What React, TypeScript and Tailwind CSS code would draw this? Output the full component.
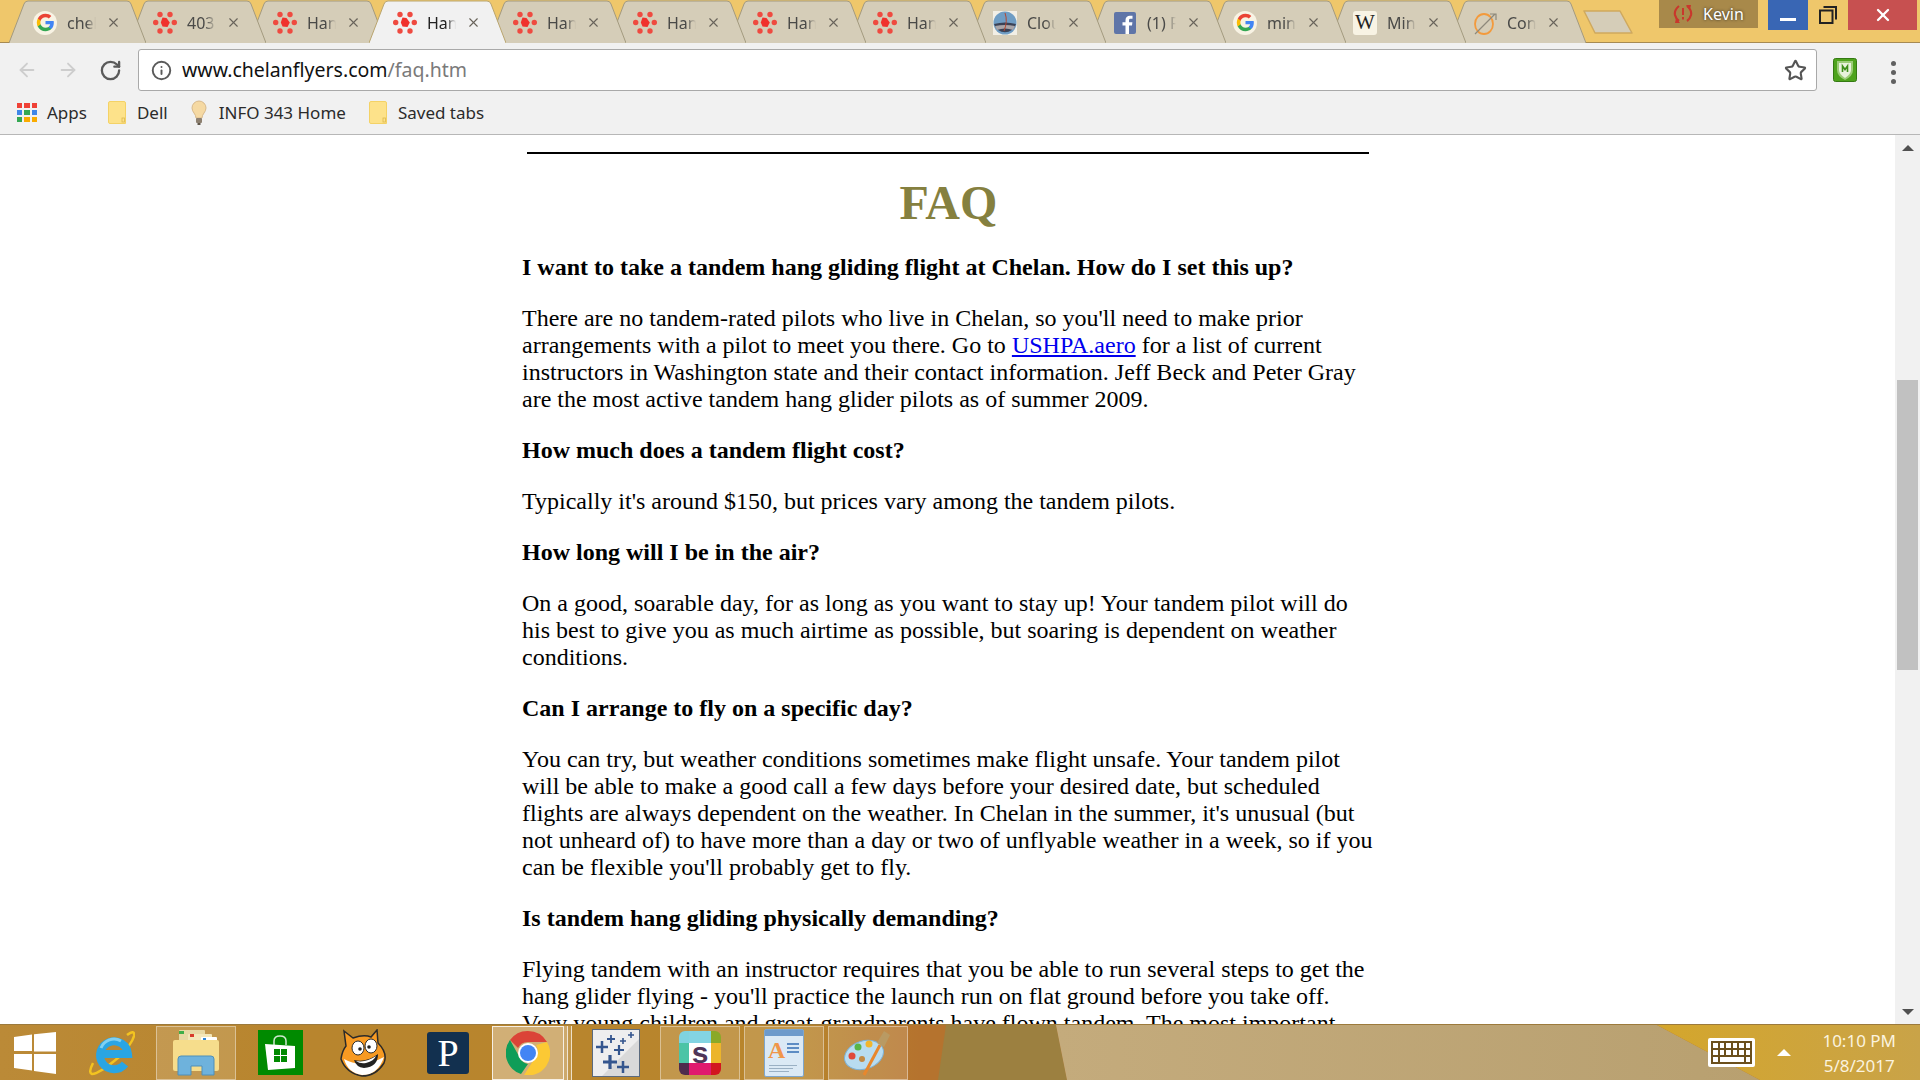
import React from 'react';
import { ArrowLeft, ArrowRight, Info, RotateCw, Star, X } from 'lucide-react';

type TabItem = { icon: string; title: string; active?: boolean };

const tabs: TabItem[] = [
  { icon: 'google', title: 'chelan' },
  { icon: 'paw', title: '403 Forbidden' },
  { icon: 'paw', title: 'Hang Gliding' },
  { icon: 'paw', title: 'Hang Gliding', active: true },
  { icon: 'paw', title: 'Hang Gliding' },
  { icon: 'paw', title: 'Hang Gliding' },
  { icon: 'paw', title: 'Hang Gliding' },
  { icon: 'paw', title: 'Hang Gliding' },
  { icon: 'cloud', title: 'Cloudbase' },
  { icon: 'facebook', title: '(1) Facebook' },
  { icon: 'google', title: 'minutes' },
  { icon: 'wiki', title: 'Minutes' },
  { icon: 'compass', title: 'Contact' },
];

function GoogleIcon() {
  return (
    <div className="w-[24px] h-[24px] rounded-full bg-[#f8f3e4] flex items-center justify-center">
      <svg viewBox="0 0 48 48" className="w-[19px] h-[19px]">
        <path fill="#4285F4" d="M45 24.5c0-1.6-.1-3.1-.4-4.5H24v8.5h11.8c-.5 2.800-2 5.100-4.400 6.700v5.500h7.100c4.100-3.800 6.500-9.400 6.500-16.200z" />
        <path fill="#34A853" d="M24 46c5.900 0 10.900-2 14.500-5.300l-7.100-5.500c-2 1.300-4.500 2.100-7.400 2.100-5.700 0-10.500-3.800-12.200-9H4.500v5.700C8.100 41.100 15.500 46 24 46z" />
        <path fill="#FBBC05" d="M11.800 28.300c-.4-1.300-.7-2.800-.7-4.300s.3-3 .7-4.300V14H4.500C3 17 2 20.400 2 24s1 7 2.500 10l7.300-5.700z" />
        <path fill="#EA4335" d="M24 10.800c3.200 0 6.100 1.100 8.400 3.300l6.300-6.300C34.900 4.200 29.900 2 24 2 15.500 2 8.100 6.900 4.500 14l7.300 5.700c1.700-5.100 6.500-8.900 12.200-8.900z" />
      </svg>
    </div>
  );
}

function PawIcon() {
  return (
    <svg viewBox="0 0 24 24" className="w-[24px] h-[24px]">
      <g fill="#ef4a40">
        <circle cx="7" cy="3.500" r="2.700" />
        <circle cx="17" cy="3.500" r="2.700" />
        <circle cx="2.700" cy="11.500" r="2.700" />
        <circle cx="21.300" cy="11.500" r="2.700" />
        <circle cx="7" cy="20" r="2.700" />
        <circle cx="17" cy="20" r="2.700" />
      </g>
      <path d="M9.500 6.500 L13.500 7 L16.800 11.500 L14.500 16 L9.500 15.500 L7.800 11.500 Z" fill="#f0302c" />
    </svg>
  );
}

function CloudIcon() {
  return (
    <svg viewBox="0 0 24 24" className="w-[24px] h-[24px]">
      <rect width="24" height="24" fill="#f2efe6" />
      <circle cx="12" cy="12" r="11.500" fill="#6f9dc4" />
      <path d="M1 13 Q12 10 23 13 A11.500 11.500 0 0 1 1 13z" fill="#3b4256" />
      <path d="M2 15 Q12 13 22 15 L20 19 Q12 16 4 19z" fill="#a9a5a8" />
      <path d="M12 2 Q15 10 11 20" stroke="#b5452e" strokeWidth="1" fill="none" />
    </svg>
  );
}

function FacebookIcon() {
  return (
    <svg viewBox="0 0 22 22" className="w-[22px] h-[22px]">
      <rect width="22" height="22" rx="2" fill="#5f75a8" />
      <path d="M15 22v-8.500h3l.4-3.300H15V8.300c0-1 .3-1.600 1.700-1.600h1.800V3.800c-.4 0-1.400-.1-2.600-.1-2.600 0-4.400 1.600-4.400 4.500v2H8.500v3.300h3V22z" fill="#fff" />
    </svg>
  );
}

function WikiIcon() {
  return (
    <div className="w-[24px] h-[24px] rounded-[3px] bg-[#f8f3e4] flex items-center justify-center text-[21px] leading-none text-[#222] font-['Liberation_Serif',serif]">
      W
    </div>
  );
}

function CompassIcon() {
  return (
    <svg viewBox="0 0 24 24" className="w-[24px] h-[24px]">
      <ellipse cx="11" cy="13" rx="9" ry="10" stroke="#f39a3c" strokeWidth="1.800" fill="none" />
      <path d="M2 23 L22 3 M17 3 H23 V9" stroke="#8d897b" strokeWidth="1.200" fill="none" />
    </svg>
  );
}

function TabIcon({ name }: { name: string }) {
  if (name === 'google') return <GoogleIcon />;
  if (name === 'paw') return <PawIcon />;
  if (name === 'cloud') return <CloudIcon />;
  if (name === 'facebook') return <FacebookIcon />;
  if (name === 'wiki') return <WikiIcon />;
  return <CompassIcon />;
}

function Tab({ tab, index }: { tab: TabItem; index: number }) {
  return (
    <div
      className="relative w-[137px] h-[43px] shrink-0 -ml-[17px] first:ml-[9px]"
      style={{ zIndex: tab.active ? 50 : 30 - index }}
    >
      <svg viewBox="0 0 137 43" className="absolute inset-0 w-[137px] h-[43px]">
        <path
          d="M0 43 L15 4 Q16 1 19 1 L118 1 Q121 1 122 4 L137 43"
          fill={tab.active ? '#f1f1f1' : '#d5cdb8'}
          stroke={tab.active ? '#b9a56f' : '#a39a7f'}
          strokeWidth="1"
        />
      </svg>
      <div className="absolute inset-0 flex items-center pt-[2px] pl-[24px]">
        <div className="w-[24px] h-[24px] flex items-center justify-center shrink-0">
          <TabIcon name={tab.icon} />
        </div>
        <div
          className={`ml-[10px] w-[29px] overflow-hidden whitespace-nowrap text-[16px] [mask-image:linear-gradient(to_right,black_65%,transparent)] ${
            tab.active ? 'text-[#222]' : 'text-[#4a4a48]'
          }`}
        >
          {tab.title}
        </div>
        <X className="ml-[10px] w-[15px] h-[15px] text-[#68635a]" strokeWidth={1.800} />
      </div>
    </div>
  );
}

function TitleBar() {
  return (
    <div className="h-[43px] shrink-0 bg-[#efc76b] border-b border-[#a68a52] flex items-start">
      {tabs.map((tab, i) => (
        <Tab key={i} tab={tab} index={i} />
      ))}
      <div className="-ml-[3px] mt-[10px] w-[50px] h-[24px] shrink-0">
        <svg viewBox="0 0 50 24" className="w-[50px] h-[24px]">
          <path d="M1 1 H37 L49 23 H12 Z" fill="#d5cdb8" stroke="#cfa95e" strokeWidth="1.500" strokeLinejoin="round" />
        </svg>
      </div>
      <div className="ml-[26px] w-[99px] h-[28px] bg-[#a8894a] flex items-center justify-center gap-[10px] shrink-0">
        <svg viewBox="0 0 20 20" className="w-[20px] h-[20px]">
          <path d="M6 2 Q1 6 2 11 Q3 15 6 17 M14 2 Q19 6 18 11 Q17 15 14 17" stroke="#c9372c" strokeWidth="2.200" fill="none" />
          <path d="M3 14 L7 19 L2 19 Z M13 1 H18 L17 6 Z" fill="#c9372c" />
          <path d="M10 4 V11 M10 13 V15.500" stroke="#c9372c" strokeWidth="2" />
        </svg>
        <span className="text-[16px] text-white [text-shadow:0_0_3px_#222]">Kevin</span>
      </div>
      <div className="ml-[10px] w-[40px] h-[30px] bg-[#3966b4] flex items-center justify-center pt-[9px] shrink-0">
        <div className="w-[16px] h-[3px] bg-white" />
      </div>
      <div className="w-[40px] h-[30px] flex items-center justify-center shrink-0">
        <svg viewBox="0 0 18 18" className="w-[18px] h-[18px]">
          <rect x="1" y="4.500" width="12.500" height="12.500" fill="none" stroke="#222" strokeWidth="2" />
          <path d="M4.500 1 H17 V13.500" fill="none" stroke="#222" strokeWidth="2" />
        </svg>
      </div>
      <div className="w-[69px] h-[30px] bg-[#c75050] flex items-center justify-center shrink-0">
        <X className="w-[20px] h-[20px] text-white" strokeWidth={2.800} />
      </div>
    </div>
  );
}

function AddressBar() {
  return (
    <div className="h-[48px] shrink-0 bg-[#f1f1f1] flex items-start pt-[6px]">
      <div className="w-[138px] h-[42px] flex items-center shrink-0">
        <ArrowLeft className="ml-[16px] w-[22px] h-[22px] text-[#cdcdcd]" strokeWidth={2} />
        <ArrowRight className="ml-[19px] w-[22px] h-[22px] text-[#cdcdcd]" strokeWidth={2} />
        <RotateCw className="ml-[20px] w-[23px] h-[23px] text-[#5a5a5a]" strokeWidth={2.400} />
      </div>
      <div className="w-[1679px] h-[42px] bg-white border border-[#a9a9a9] rounded-[3px] flex items-center shrink-0">
        <Info className="ml-[12px] w-[21px] h-[21px] text-[#5a5a5a]" strokeWidth={2.200} />
        <div className="ml-[10px] text-[19.500px] text-[#111] whitespace-nowrap">
          www.chelanflyers.com<span className="text-[#7a7a7a]">/faq.htm</span>
        </div>
        <Star className="ml-auto mr-[9px] w-[23px] h-[23px] text-[#555]" strokeWidth={2.200} />
      </div>
      <div className="ml-[16px] w-[24px] h-[24px] mt-[9px] shrink-0">
        <svg viewBox="0 0 24 24" className="w-[24px] h-[24px]">
          <rect x="0.500" y="0.500" width="23" height="23" rx="2" fill="#4ea31d" stroke="#347a12" />
          <path d="M4 3 H20 V12 Q20 18 12 22 Q4 18 4 12 Z" fill="#9ccc78" />
          <path d="M6 5 H18 V12 Q18 16 12 20 Q6 16 6 12 Z" fill="#e8f3dc" />
          <path d="M9.500 14 V8 L12 11.500 L14.500 8 V14" stroke="#3d8f1a" strokeWidth="1.600" fill="none" />
        </svg>
      </div>
      <div className="ml-[34px] mt-[12px] flex flex-col gap-[4px] shrink-0">
        <div className="w-[5px] h-[5px] rounded-full bg-[#606060]" />
        <div className="w-[5px] h-[5px] rounded-full bg-[#606060]" />
        <div className="w-[5px] h-[5px] rounded-full bg-[#606060]" />
      </div>
    </div>
  );
}

function FolderIcon() {
  return (
    <svg viewBox="0 0 18 23" className="w-[18px] h-[23px] shrink-0">
      <path d="M2 0.500 H16 Q17.500 .5 17.500 2 V22.500 H2 Q.5 22.500 .5 21 V2 Q.5 .5 2 .5 Z" fill="#fde28a" stroke="#f4d266" />
      <rect x="14" y="17" width="2.500" height="4" fill="none" stroke="#dcb84e" strokeWidth="0.800" />
    </svg>
  );
}

function BookmarksBar() {
  return (
    <div className="h-[44px] shrink-0 bg-[#f1f1f1] border-b border-[#b7b7b7] flex items-center text-[17px] text-[#2b2b2b]">
      <div className="ml-[17px] grid grid-cols-3 gap-[2px] w-[20px] shrink-0">
        {['#ef4136', '#ef4136', '#ef4136', '#3f86e8', '#34a853', '#3f86e8', '#34a853', '#f9ab00', '#f9ab00'].map((c, i) => (
          <div key={i} className="h-[5px] w-[5.300px]" style={{ backgroundColor: c }} />
        ))}
      </div>
      <span className="ml-[10px]">Apps</span>
      <div className="ml-[21px]">
        <FolderIcon />
      </div>
      <span className="ml-[11px]">Dell</span>
      <svg viewBox="0 0 16 26" className="ml-[23px] w-[16px] h-[26px] shrink-0">
        <path d="M8 1 A7 7 0 0 1 15 8 C15 12 11 14 11 18 H5 C5 14 1 12 1 8 A7 7 0 0 1 8 1Z" fill="#f5d9a3" stroke="#d8b98a" />
        <rect x="5" y="18" width="6" height="5" rx="1" fill="#8d8070" />
        <rect x="6.500" y="23" width="3" height="2" fill="#5f564a" />
      </svg>
      <span className="ml-[12px]">INFO 343 Home</span>
      <div className="ml-[23px]">
        <FolderIcon />
      </div>
      <span className="ml-[11px]">Saved tabs</span>
    </div>
  );
}

function Question({ children }: { children: React.ReactNode }) {
  return <p className="font-bold mb-[24px]">{children}</p>;
}

function Answer({ children }: { children: React.ReactNode }) {
  return <p className="mb-[24px]">{children}</p>;
}

function PageContent() {
  return (
    <div className="flex-1 min-w-0 overflow-hidden bg-white pl-[522px] pt-[17px] font-['Liberation_Serif',serif] text-[24px] leading-[27px] text-black">
      <div className="ml-[5px] w-[842px] h-[2px] bg-black" />
      <h1 className="mt-[21px] mb-[24px] w-[853px] text-center text-[48px] leading-[55px] font-bold text-[#85803f]">FAQ</h1>
      <div className="w-[854px]">
        <Question>I want to take a tandem hang gliding flight at Chelan. How do I set this up?</Question>
        <Answer>
          There are no tandem-rated pilots who live in Chelan, so you'll need to make prior arrangements with a pilot to
          meet you there. Go to <a className="text-[#0000ee] underline">USHPA.aero</a> for a list of current instructors
          in Washington state and their contact information. Jeff Beck and Peter Gray are the most active tandem hang
          glider pilots as of summer 2009.
        </Answer>
        <Question>How much does a tandem flight cost?</Question>
        <Answer>Typically it's around $150, but prices vary among the tandem pilots.</Answer>
        <Question>How long will I be in the air?</Question>
        <Answer>
          On a good, soarable day, for as long as you want to stay up! Your tandem pilot will do his best to give you as
          much airtime as possible, but soaring is dependent on weather conditions.
        </Answer>
        <Question>Can I arrange to fly on a specific day?</Question>
        <Answer>
          You can try, but weather conditions sometimes make flight unsafe. Your tandem pilot will be able to make a good
          call a few days before your desired date, but scheduled flights are always dependent on the weather. In Chelan
          in the summer, it's unusual (but not unheard of) to have more than a day or two of unflyable weather in a week,
          so if you can be flexible you'll probably get to fly.
        </Answer>
        <Question>Is tandem hang gliding physically demanding?</Question>
        <Answer>
          Flying tandem with an instructor requires that you be able to run several steps to get the hang glider flying -
          you'll practice the launch run on flat ground before you take off. Very young children and great-grandparents
          have flown tandem. The most important
        </Answer>
      </div>
    </div>
  );
}

function Scrollbar() {
  return (
    <div className="w-[25px] shrink-0 bg-[#f1f1f1] flex flex-col items-center pt-[10px] pb-[9px]">
      <div className="w-0 h-0 border-l-[6px] border-r-[6px] border-b-[6px] border-l-transparent border-r-transparent border-b-[#505050]" />
      <div className="mt-[229px] w-[21px] h-[290px] bg-[#c1c1c1]" />
      <div className="flex-1" />
      <div className="w-0 h-0 border-l-[6px] border-r-[6px] border-t-[6px] border-l-transparent border-r-transparent border-t-[#505050]" />
    </div>
  );
}

function StartLogo() {
  return (
    <svg viewBox="0 0 42 42" className="w-[42px] h-[42px]">
      <g fill="#fff">
        <polygon points="0,5 18,2.500 18,19 0,19" />
        <polygon points="20,2.200 42,0 42,19.500 20,19.500" />
        <polygon points="0,22 18,22 18,38.500 0,36" />
        <polygon points="20,22 42,22 42,42 20,39" />
      </g>
    </svg>
  );
}

function IeIcon() {
  return (
    <svg viewBox="0 0 46 46" className="w-[46px] h-[46px]">
      <path d="M38 5 Q46 -1 45 6 Q43 14 30 27 Q10 44 3 44 Q-1 43 4 33" fill="none" stroke="#f3c320" strokeWidth="2.500" />
      <path d="M15 24 H39 A14 14 0 1 0 36 34" fill="none" stroke="#2aa5e3" strokeWidth="8" />
      <path d="M32 11 A14 14 0 0 0 12 18" fill="none" stroke="#7fd0f2" strokeWidth="3" />
    </svg>
  );
}

function ExplorerIcon() {
  return (
    <svg viewBox="0 0 46 48" className="w-[46px] h-[48px]">
      <rect x="6" y="1" width="26" height="18" rx="1" fill="#e8d9a4" />
      <rect x="6" y="2" width="5" height="3" fill="#3fae49" />
      <rect x="15" y="5" width="24" height="14" rx="1" fill="#f4e7b9" />
      <rect x="17" y="5" width="4" height="3" fill="#d83b2b" />
      <rect x="28" y="8" width="16" height="12" rx="1" fill="#fff" />
      <rect x="30" y="9" width="3" height="3" fill="#2c86d8" />
      <rect x="0" y="11" width="46" height="31" rx="2" fill="#f6dd8c" />
      <path d="M18 46 V37 H29 V46 H41 V30 Q41 27 38 27 H8 Q5 27 5 30 V46 Z" fill="#6eb2dc" stroke="#4e8fb8" />
    </svg>
  );
}

function StoreIcon() {
  return (
    <div className="w-[45px] h-[45px] bg-[#008a00] flex items-center justify-center">
      <svg viewBox="0 0 32 36" className="w-[32px] h-[36px]">
        <path d="M10 10 V6 Q10 1 16 1 Q22 1 22 6 V10" fill="none" stroke="#cfe8cf" strokeWidth="1.500" />
        <path d="M1 9 L31 11 V33 L4 35 Z" fill="#fff" />
        <g fill="#008a00">
          <rect x="10" y="14" width="6" height="6" />
          <rect x="17" y="14" width="6" height="6" />
          <rect x="10" y="21" width="6" height="6" />
          <rect x="17" y="21" width="6" height="6" />
        </g>
      </svg>
    </div>
  );
}

function ScratchIcon() {
  return (
    <svg viewBox="0 0 48 48" className="w-[48px] h-[48px]">
      <path d="M4 2 L13 9 Q24 5 31 8 L37 1 L38 14 Q48 24 44 34 Q36 47 22 47 Q6 44 1 30 Q2 22 6 17 Z" fill="#f79a22" stroke="#2a2a2a" strokeWidth="1.500" />
      <path d="M4 30 Q22 40 44 28 Q38 46 22 46 Q8 44 4 30 Z" fill="#fff" />
      <ellipse cx="18" cy="19" rx="6" ry="7" fill="#fff" stroke="#2a2a2a" />
      <ellipse cx="31" cy="17" rx="6" ry="7" fill="#fff" stroke="#2a2a2a" />
      <circle cx="20" cy="20" r="1.800" fill="#222" />
      <circle cx="29" cy="18" r="1.800" fill="#222" />
      <path d="M14 31 Q26 34 38 25 Q38 38 24 39 Q16 38 14 31 Z" fill="#222" />
      <path d="M16 32 Q26 34 36 27 Q34 32 26 34 Q20 35 16 32 Z" fill="#fff" />
    </svg>
  );
}

function TableauIcon() {
  const pluses: [number, number, number, number][] = [
    [10, 18, 6, 2.500],
    [19, 10, 4, 1.800],
    [31, 12, 3, 1.600],
    [39, 6, 3, 1.600],
    [27, 21, 5, 2.200],
    [18, 33, 7, 3.200],
    [31, 38, 6, 2.500],
  ];
  return (
    <svg viewBox="0 0 48 48" className="w-[48px] h-[48px]">
      <rect x="0.500" y="0.500" width="47" height="47" fill="#eeeeee" stroke="#5b6a7d" />
      <path d="M10 47 L47 10 V47 Z" fill="#d9d9d9" />
      {pluses.map(([x, y, r, w], i) => (
        <path key={i} d={`M${x - r} ${y} H${x + r} M${x} ${y - r} V${y + r}`} stroke="#35568e" strokeWidth={w} />
      ))}
    </svg>
  );
}

function SlackIcon() {
  return (
    <div className="relative w-[42px] h-[44px] rounded-[6px] overflow-hidden">
      <div className="absolute inset-0 grid grid-cols-[10px_22px_10px] grid-rows-[12px_20px_12px]">
        <div className="bg-[#7fd3e0]" />
        <div className="bg-[#83d4e2]" />
        <div className="bg-[#8aa928]" />
        <div className="bg-[#4bc4a6]" />
        <div className="bg-white" />
        <div className="bg-[#ecb52b]" />
        <div className="bg-[#4e2a4d]" />
        <div className="bg-[#e01a6e]" />
        <div className="bg-[#d2161f]" />
      </div>
      <div className="absolute inset-0 flex items-center justify-center text-[30px] leading-none font-bold text-[#4f3558] font-['Liberation_Sans',sans-serif]">
        s
      </div>
    </div>
  );
}

function WordpadIcon() {
  return (
    <div className="relative w-[40px] h-[48px] bg-[#dbe9f5] border border-[#7ea6cc] rounded-[2px] flex flex-col">
      <div className="h-[6px] bg-[#6d9acb]" />
      <div className="flex items-start pl-[3px] pt-[1px]">
        <span className="text-[24px] leading-[26px] font-bold text-[#f0964a] font-['Liberation_Serif',serif]">A</span>
        <div className="ml-[2px] mt-[6px] flex flex-col gap-[2px]">
          <div className="w-[12px] h-[2px] bg-[#5d8cc4]" />
          <div className="w-[12px] h-[2px] bg-[#5d8cc4]" />
          <div className="w-[12px] h-[2px] bg-[#5d8cc4]" />
        </div>
      </div>
      <div className="ml-[4px] mt-[2px] flex flex-col gap-[2px]">
        <div className="w-[28px] h-[1px] bg-[#9ab0c4]" />
        <div className="w-[24px] h-[1px] bg-[#9ab0c4]" />
        <div className="w-[20px] h-[1px] bg-[#9ab0c4]" />
      </div>
    </div>
  );
}

function PaintIcon() {
  return (
    <svg viewBox="0 0 48 48" className="w-[48px] h-[48px]">
      <ellipse cx="20" cy="26" rx="20" ry="14" transform="rotate(-18 20 26)" fill="#b8dcf0" stroke="#7fb2d4" />
      <circle cx="18" cy="30" r="3" fill="#c28a45" />
      <circle cx="8" cy="27" r="3.500" fill="#e0483a" />
      <circle cx="14" cy="18" r="3.500" fill="#59b548" />
      <circle cx="25" cy="15" r="3.500" fill="#f2b62c" />
      <path d="M20 46 L36 16" stroke="#e8872c" strokeWidth="3" />
      <path d="M33 14 L40 2 L46 6 L40 18 Z" fill="#b99a63" />
    </svg>
  );
}

function ChromeIcon() {
  return (
    <svg viewBox="0 0 44 44" className="w-[44px] h-[44px]">
      <path d="M22 0 A22 22 0 0 1 41 11 H22 A11 11 0 0 0 12 17 L4 9 A22 22 0 0 1 22 0Z" fill="#db4437" />
      <path d="M4 9 L14 27 A11 11 0 0 0 22 33 L15 43 A22 22 0 0 1 4 9Z" fill="#0f9d58" />
      <path d="M41 11 A22 22 0 0 1 18 44 L29 27 A11 11 0 0 0 30 14 Z" fill="#fcc934" />
      <circle cx="22" cy="22" r="10" fill="#fff" />
      <circle cx="22" cy="22" r="8" fill="#4285f4" />
    </svg>
  );
}

function TaskButton({ children, running }: { children: React.ReactNode; running?: boolean }) {
  return (
    <div
      className={`w-[80px] h-[54px] shrink-0 flex items-center justify-center ${
        running ? 'bg-white/15 border border-white/40' : ''
      }`}
    >
      {children}
    </div>
  );
}

function Taskbar() {
  return (
    <div className="relative h-[56px] shrink-0 border-t border-[#9c7a3c] bg-[linear-gradient(90deg,#bb8a37_0px,#b8852e_300px,#b8852c_800px,#b5732e_920px)] flex items-center text-white">
      <svg viewBox="0 0 1920 56" preserveAspectRatio="none" className="absolute inset-0 w-full h-full">
        <defs>
          <linearGradient id="tan" x1="0" x2="1" y1="0" y2="0">
            <stop offset="0" stopColor="#c4ab7c" />
            <stop offset="1" stopColor="#b8a070" />
          </linearGradient>
          <linearGradient id="gold" x1="0" x2="1" y1="0" y2="0">
            <stop offset="0" stopColor="#d4a62c" />
            <stop offset="1" stopColor="#c9a348" />
          </linearGradient>
        </defs>
        <polygon points="946,0 1056,0 1067,56 938,56" fill="#9c8040" />
        <polygon points="1056,0 1657,0 1760,56 1067,56" fill="url(#tan)" />
        <polygon points="1657,0 1920,0 1920,56 1760,56" fill="url(#gold)" />
      </svg>
      <div className="relative flex items-center gap-[4px] w-full h-full">
        <div className="w-[68px] shrink-0 pl-[14px]">
          <StartLogo />
        </div>
        <TaskButton>
          <IeIcon />
        </TaskButton>
        <TaskButton running>
          <ExplorerIcon />
        </TaskButton>
        <TaskButton>
          <StoreIcon />
        </TaskButton>
        <TaskButton>
          <ScratchIcon />
        </TaskButton>
        <TaskButton>
          <div className="w-[42px] h-[42px] rounded-[3px] bg-[#12304f] flex items-center justify-center text-[38px] leading-none text-white font-['Liberation_Serif',serif]">
            P
          </div>
        </TaskButton>
        <div className="w-[80px] h-[54px] shrink-0 flex">
          <div className="w-[72px] h-full bg-white/35 border border-white/80 flex items-center justify-center">
            <ChromeIcon />
          </div>
          <div className="w-[4px] h-full border-r border-white/70 bg-white/30" />
          <div className="w-[4px] h-full border-r border-white/70 bg-white/15" />
        </div>
        <TaskButton>
          <TableauIcon />
        </TaskButton>
        <TaskButton running>
          <SlackIcon />
        </TaskButton>
        <TaskButton running>
          <WordpadIcon />
        </TaskButton>
        <TaskButton running>
          <PaintIcon />
        </TaskButton>
        <div className="ml-auto flex items-center shrink-0">
          <div className="w-[47px] h-[29px] bg-white rounded-[2px] flex items-center justify-center">
            <div className="w-[41px] h-[23px] bg-[#6b4f1c] grid grid-cols-6 gap-[2px] p-[2px]">
              {Array.from({ length: 12 }).map((_, i) => (
                <div key={i} className="bg-white" />
              ))}
              <div className="bg-white" />
              <div className="bg-white col-span-4" />
              <div className="bg-white" />
            </div>
          </div>
          <div className="ml-[22px] w-0 h-0 border-l-[7px] border-r-[7px] border-b-[7px] border-l-transparent border-r-transparent border-b-white" />
          <div className="ml-[31px] mr-[24px] flex flex-col items-center text-[17px] leading-[25px] text-[#fbf3df]">
            <span>10:10 PM</span>
            <span>5/8/2017</span>
          </div>
        </div>
      </div>
    </div>
  );
}

export default function App() {
  return (
    <div className="w-[1920px] h-[1080px] overflow-hidden flex flex-col font-['Noto_Sans',sans-serif]">
      <TitleBar />
      <AddressBar />
      <BookmarksBar />
      <div className="flex-1 min-h-0 flex">
        <PageContent />
        <Scrollbar />
      </div>
      <Taskbar />
    </div>
  );
}
